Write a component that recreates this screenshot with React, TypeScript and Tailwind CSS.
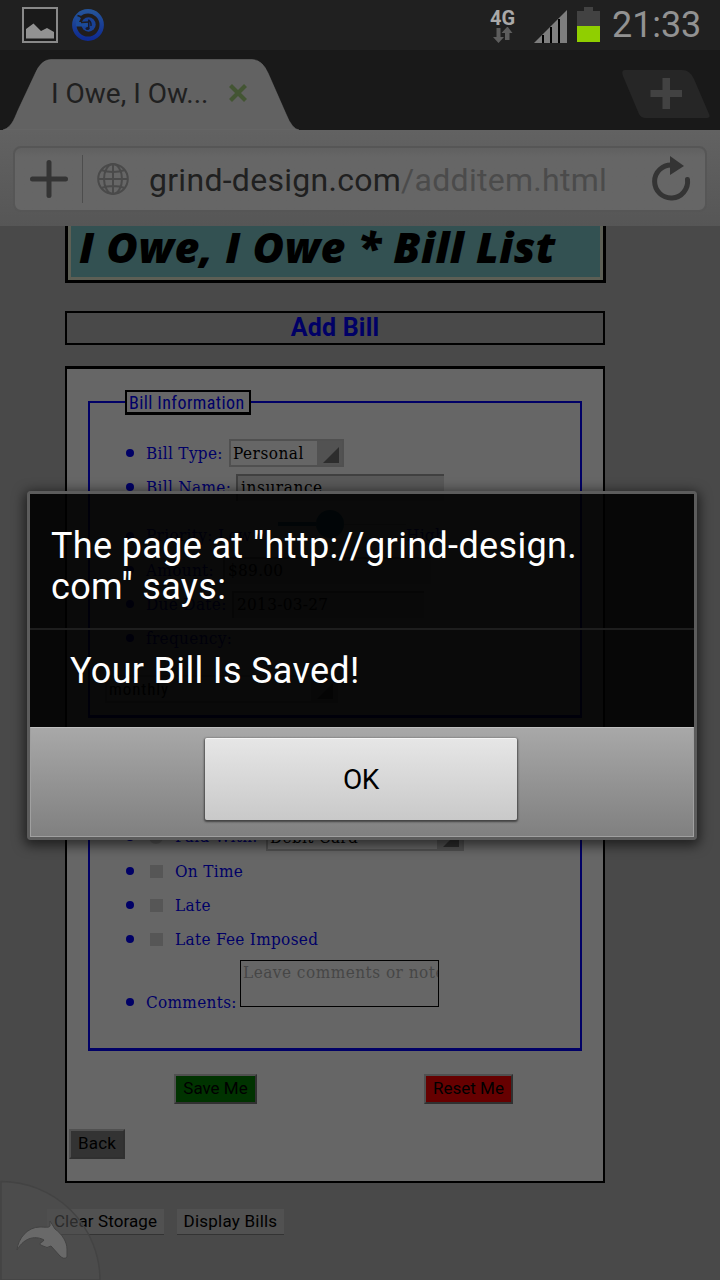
import type { ReactNode } from "react";

const serif = "font-['DejaVu_Serif_Condensed','DejaVu_Serif',serif] [font-stretch:condensed] tracking-[0.32px]";

function StatusBar() {
  return (
    <header className="flex h-[50px] shrink-0 items-center bg-[#202020]">
      <svg className="ml-[21px] shrink-0" width="38" height="38" viewBox="0 0 38 38">
        <rect x="2" y="2" width="34" height="34" fill="#1a1a1a" stroke="#898989" strokeWidth="2" />
        <path d="M5 23 L12.500 17.500 L20 25 L26 22 L33 26 V32.500 H5Z" fill="#929292" />
      </svg>
      <svg className="ml-[12px] shrink-0" width="34" height="34" viewBox="0 0 34 34">
        <defs>
          <linearGradient id="ring" x1="0" y1="0" x2="0" y2="1">
            <stop offset="0" stopColor="#24539a" />
            <stop offset="1" stopColor="#0f2b91" />
          </linearGradient>
        </defs>
        <circle cx="17" cy="17" r="13.700" fill="#211d1c" stroke="url(#ring)" strokeWidth="4.400" />
        <circle cx="17.500" cy="16.500" r="7.200" fill="#194195" />
        <path d="M5 7 L10 10 L8 14 H18 V18.500 H5Z" fill="#1c4b99" />
        <path d="M6.500 7.500 L12.500 9.500 M10 14.500 L18 14" stroke="#201d1d" strokeWidth="1.500" fill="none" />
        <path d="M17.700 11.500 V21 M17.700 12 Q20.500 14 20 18" stroke="#171a2b" strokeWidth="1.500" fill="none" />
        <ellipse cx="16.500" cy="20.500" rx="2" ry="1.600" fill="#171a2b" />
      </svg>
      <div className="mr-[18px] ml-auto flex w-[27px] flex-col items-center">
        <span className="h-[19px] font-[Roboto] text-[20px] leading-[21px] font-bold text-[#a9a9a9]">4G</span>
        <svg width="20" height="16" viewBox="0 0 20 16">
          <path d="M3 1 H7 V10 H10.500 L5 16 L-.5 10 H3Z" transform="translate(.5 0)" fill="#5d5d5d" />
          <path d="M12.500 13 V6 H9 L15 -.5 L20 6 H17 V13Z" fill="#5d5d5d" transform="translate(-.5 0)" />
        </svg>
      </div>
      <svg className="mt-[2px] shrink-0" width="33" height="33" viewBox="0 0 33 33">
        <path d="M0 33 L33 0 V33Z" fill="#7e7e7e" />
        <path d="M8 25 h2 v8 h-2Z M16 17 h2 v16 h-2Z M24 9 h2 v24 h-2Z" fill="#000" />
      </svg>
      <svg className="mt-[-1px] ml-[10px] shrink-0" width="23" height="35" viewBox="0 0 23 35">
        <path d="M7 0 H16 V4 H23 V20 H0 V4 H7Z" fill="#424242" />
        <rect y="19" width="23" height="16" fill="#90cf00" />
      </svg>
      <span className="mr-[20px] ml-[12px] w-[88px] font-[Roboto] text-[36px] leading-[50px] tracking-[-0.1px] whitespace-nowrap text-[#929292]">21:33</span>
    </header>
  );
}

function TabBar() {
  return (
    <div className="flex h-[80px] shrink-0 bg-[#191919]">
      <div className="relative h-[80px] w-[300px]">
        <svg className="absolute inset-0" width="300" height="80" viewBox="0 0 300 80">
          <path
            d="M3 80 C13 77 15 66 20 56 L35 24 Q41 9.500 51 9.500 H252 Q262 9.500 268 23 L286 64 Q292 79 299 80Z"
            fill="#626262"
            stroke="#707070"
            strokeWidth=".5"
          />
        </svg>
        <div className="relative flex h-[80px] items-center">
          <span className="mt-[7px] ml-[51px] w-[160px] font-[Roboto] text-[28px] whitespace-nowrap text-[#202020]">
            I Owe, I Ow...
          </span>
          <svg className="mt-[6px] ml-[18px]" width="18" height="18" viewBox="0 0 18 18">
            <path d="M1.500 1.500 L16.500 16.500 M16.500 1.500 L1.500 16.500" stroke="#435533" strokeWidth="4.200" />
          </svg>
        </div>
      </div>
      <svg className="mt-[19px] mr-[10px] ml-auto" width="88" height="50" viewBox="0 0 88 50">
        <path d="M3 1 H60 Q68 1 72 10 L87 45 Q89 49 84 49 H24 Q19 49 17 45 L1 7 Q-1 1 3 1Z" fill="#262626" />
        <path d="M40.500 9 H48 V21 H60 V28 H48 V40 H40.500 V28 H28.500 V21 H40.500Z" fill="#424242" />
      </svg>
    </div>
  );
}

function UrlBar() {
  return (
    <div className="h-[96px] shrink-0 bg-linear-to-b from-[#626262] to-[#565656] px-[13px] pt-[16px]">
      <div className="flex h-[66px] items-center rounded-[8px] border-2 border-[#565656] bg-linear-to-b from-[#606060] from-0% via-[#666] via-15% to-[#666]">
        <svg className="ml-[15px]" width="38" height="38" viewBox="0 0 38 38">
          <path d="M19 2.500 V35.500 M2.500 19 H35.500" stroke="#343434" strokeWidth="5" strokeLinecap="round" />
        </svg>
        <div className="ml-[14px] h-[48px] w-px bg-[#4d4d4d]" />
        <svg className="ml-[13px]" width="34" height="34" viewBox="0 0 34 34" fill="none" stroke="#4a4a4a" strokeWidth="2">
          <circle cx="17" cy="17" r="14.800" />
          <ellipse cx="17" cy="17" rx="9" ry="15" />
          <path d="M17 2 V32 M2 17 H32 M5 8 Q17 12 29 8 M5 26 Q17 22 29 26" />
        </svg>
        <span className="mt-[2px] ml-[19px] font-[Roboto] text-[32px] tracking-[0.28px] whitespace-nowrap text-[#4b4b4b]">
          <span className="text-[#202020]">grind-design.com</span>/additem.html
        </span>
        <svg className="mr-[14px] ml-auto" width="40" height="46" viewBox="0 0 40 46">
          <path d="M21 9 A16.500 16.500 0 1 0 36.500 23.500" fill="none" stroke="#343434" strokeWidth="5" strokeLinecap="round" />
          <path d="M19 0 L33 10 L19 19Z" fill="#343434" />
        </svg>
      </div>
    </div>
  );
}

function Bullet() {
  return <i className="mr-[12px] ml-[36px] block size-[8px] shrink-0 rounded-full bg-[#000066]" />;
}

function Row({ children, className = "" }: { children: ReactNode; className?: string }) {
  return (
    <li className={`flex h-[34px] items-center ${className}`}>
      <Bullet />
      {children}
    </li>
  );
}

function Select({ value, className }: { value: string; className: string }) {
  return (
    <div className={`flex h-[28px] items-stretch border-2 border-[#505050] pl-[2px] leading-[24px] text-black ${className}`}>
      <span className="flex-1 whitespace-nowrap">{value}</span>
      <span className="flex w-[25px] items-center justify-center bg-[#525252]">
        <svg className="mt-[4px] ml-[3px]" width="16" height="16" viewBox="0 0 16 16">
          <path d="M16 0 V16 H0Z" fill="#2d2d2d" />
        </svg>
      </span>
    </div>
  );
}

function Field({ value, className }: { value: string; className: string }) {
  return (
    <div className={`h-[27px] border-t-2 border-l-2 border-[#404040] bg-[#595959] pl-[3px] leading-[23px] whitespace-nowrap text-black ${className}`}>
      {value}
    </div>
  );
}

function Check({ label }: { label: string }) {
  return (
    <Row>
      <i className="mr-[12px] ml-[4px] size-[13px] bg-[#565656]" />
      <span className="pt-px">{label}</span>
    </Row>
  );
}

const bevel = "border-2 border-t-[#505050] border-l-[#505050] border-r-[#303030] border-b-[#303030]";

function Page() {
  return (
    <main className="flex-1 overflow-hidden bg-[#494949] pl-[65px]">
      <div className="h-[57px] w-[541px] border-[3px] border-t-0 border-black">
        <div className="h-[54px] border-[3px] border-t-0 border-[#5d5f55] bg-[#335152] pl-[8px]">
          <h1 className="font-['Open_Sans',sans-serif] text-[43px] leading-[42px] font-extrabold tracking-[0.5px] whitespace-nowrap text-black italic">
            I Owe, I Owe * Bill List
          </h1>
        </div>
      </div>
      <h2 className="mt-[28px] h-[34px] w-[540px] border-2 border-black text-center font-[Roboto] text-[25px] leading-[29px] font-bold tracking-[0.2px] text-[#000066]">
        Add Bill
      </h2>
      <section className="mt-[21px] h-[817px] w-[540px] border-2 border-t-[3px] border-black bg-[#666]">
        <div className={`mt-[32px] ml-[21px] h-[317px] w-[494px] border-2 border-b-[3px] border-[#000066] text-[17px] text-[#000066] ${serif}`}>
          <div className="-mt-[13px] ml-[35px] h-[25px] w-[126px] border-2 border-b-[3px] border-black bg-[#666] pl-[2px] font-[Roboto] text-[18px] leading-[21px] tracking-[0.4px] whitespace-nowrap">
            Bill Information
          </div>
          <ul className="mt-[21px]">
            <Row>
              <span className="w-[83px] pt-px">Bill Type:</span>
              <Select value="Personal" className="w-[115px] tracking-[0.5px]" />
            </Row>
            <Row>
              <span className="w-[90px] pt-px">Bill Name:</span>
              <Field value="insurance" className="w-[208px] tracking-[0.6px]" />
            </Row>
            <Row className="mt-[15px]">
              <span className="w-[132px]">Priority: Low</span>
              <div className="mb-[24px] flex h-[28px] w-[128px] items-center">
                <i className="h-[4px] w-[38px] bg-[#0a3a48]" />
                <i className="size-[28px] rounded-full bg-[#0a3a48]" />
                <i className="h-px flex-1 bg-[#555]" />
              </div>
              <span>High</span>
            </Row>
            <Row>
              <span className="w-[77px] pt-px">Amount:</span>
              <Field value="$89.00" className="w-[208px]" />
            </Row>
            <Row>
              <span className="w-[86px] pt-px">Due Date:</span>
              <Field value="2013-03-27" className="w-[192px]" />
            </Row>
            <Row>
              <span className="pt-px">frequency:</span>
            </Row>
          </ul>
          <Select value="monthly" className="mt-[20px] ml-[15px] w-[233px] font-[Roboto] tracking-[0.9px]" />
        </div>
        <div className={`mt-[22px] ml-[21px] h-[311px] w-[494px] border-2 border-b-[3px] border-[#000066] pt-[78px] text-[17px] text-[#000066] ${serif}`}>
          <ul>
            <Row>
              <i className="mr-[12px] ml-[3px] size-[14px] rounded-full bg-[#565656]" />
              <span className="w-[91px]">Paid With:</span>
              <Select value="Debit Card" className="w-[198px]" />
            </Row>
            <Check label="On Time" />
            <Check label="Late" />
            <Check label="Late Fee Imposed" />
            <li className="mt-[4px] flex items-start">
              <span className="mt-[38px]">
                <Bullet />
              </span>
              <span className="mt-[30px] w-[94px] leading-[24px]">Comments:</span>
              <div className="h-[47px] w-[199px] overflow-hidden border border-black pl-[2px] leading-[22px] tracking-[0.5px] whitespace-nowrap text-[#464646]">
                Leave comments or notes
              </div>
            </li>
          </ul>
        </div>
        <div className="mt-[23px] flex font-[Roboto] text-[17px] leading-[23px] whitespace-nowrap text-black">
          <button className={`ml-[107px] h-[30px] w-[83px] bg-[#003300] pb-[2px] ${bevel}`}>Save Me</button>
          <button className={`ml-[167px] h-[30px] w-[89px] bg-[#660000] pb-[2px] ${bevel}`}>Reset Me</button>
        </div>
        <button className={`mt-[25px] ml-[2px] block h-[30px] w-[56px] bg-[#333] pb-[2px] font-[Roboto] text-[17px] leading-[23px] tracking-[0.2px] text-black ${bevel}`}>
          Back
        </button>
      </section>
      <div className="mt-[26px] -ml-[18px] flex gap-[13px] font-[Roboto] text-[17px] leading-[22px] whitespace-nowrap text-black">
        <button className="h-[26px] w-[117px] border-b border-[#333] bg-[#515151] pb-[2px] tracking-[0.1px]">Clear Storage</button>
        <button className="h-[26px] w-[107px] border-b border-[#333] bg-[#515151] pb-[2px] tracking-[0.22px]">Display Bills</button>
      </div>
    </main>
  );
}

function DolphinButton() {
  return (
    <svg className="absolute bottom-0 left-0" width="104" height="102" viewBox="0 0 104 102">
      <path d="M1 3.500 A99 99 0 0 1 100 102 H1Z" fill="#4e4e4e" fillOpacity=".55" stroke="#434343" strokeWidth="1.400" />
      <path
        d="M17 72 C18 61 27 49 40 49 C45 49 49 50 50 48 L50 43 L55 51 C62 56 67 64 67 71 L67 79 Q64 82 60 78 L51 68 Q47 71 43 68 Q39 67 40 65 Q43 64 44 62 C37 58 25 58 17 72Z"
        fill="#696969"
        stroke="#424242"
        strokeWidth="1"
      />
    </svg>
  );
}

function AlertDialog() {
  return (
    <div className="absolute top-[491px] left-[27px] flex h-[349px] w-[670px] flex-col rounded-[4px] border-[3px] border-[#5c5c5c] font-[Roboto] shadow-[0_3px_12px_3px_rgba(0,0,0,0.55)]">
      <div className="h-[134px] bg-black/90 pt-[32px] pl-[21px] text-[36px] leading-[41px] tracking-[0.34px] whitespace-nowrap text-white">
        The page at "http://grind-design.
        <br />
        com" says:
      </div>
      <div className="h-[2px] bg-[#1e1e1e]" />
      <div className="h-[97px] bg-black/90 pt-[20px] pl-[40px] text-[36px] leading-[42px] tracking-[0.32px] whitespace-nowrap text-white">
        Your Bill Is Saved!
      </div>
      <div className="flex h-[110px] border border-t-[#c0c0c0] border-r-[#a0a0a0] border-b-[#a0a0a0] border-l-[#a0a0a0] bg-linear-to-b from-[#a8a8a8] to-[#808080] pt-[10px] pl-[174px]">
        <button className="h-[82px] w-[312px] rounded-[2px] border-t border-[#f4f4f4] bg-linear-to-b from-[#e6e6e6] to-[#c9c9c9] text-[28px] tracking-[-0.5px] text-black shadow-[0_1px_2px_1px_rgba(0,0,0,0.5)]">
          OK
        </button>
      </div>
    </div>
  );
}

export default function App() {
  return (
    <div className="relative flex h-[1280px] w-[720px] flex-col overflow-hidden bg-[#494949]">
      <StatusBar />
      <TabBar />
      <UrlBar />
      <Page />
      <DolphinButton />
      <AlertDialog />
    </div>
  );
}
